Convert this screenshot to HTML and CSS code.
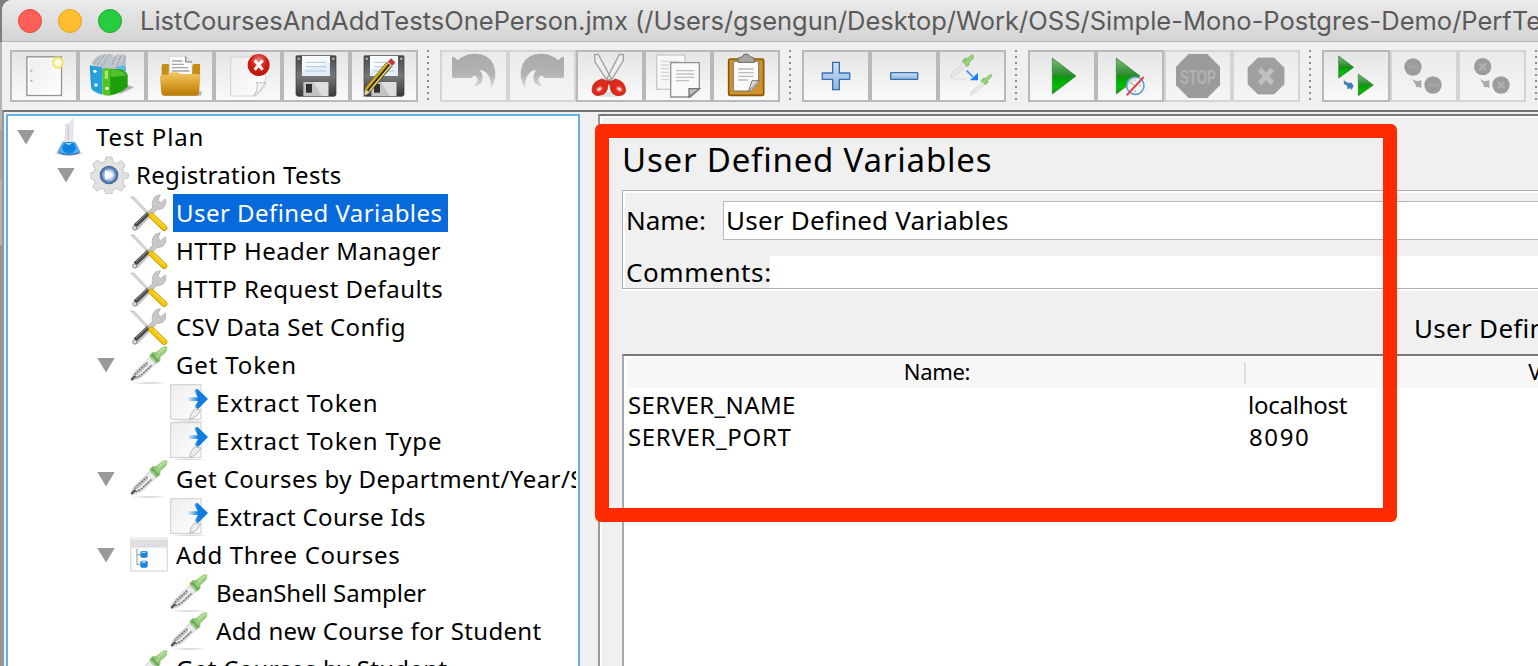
FILE: index.html
```html
<!DOCTYPE html>
<html lang="en">
<head>
<meta charset="utf-8">
<title>Apache JMeter</title>
<link rel="stylesheet" href="styles.css">
</head>
<body>
<svg class="defs" aria-hidden="true">
  <defs>
    <linearGradient id="gGreen" x1="0" y1="0" x2="0" y2="1"><stop offset="0" stop-color="#7dbd7d"/><stop offset=".48" stop-color="#2c8a2c"/><stop offset=".52" stop-color="#0a9a0a"/><stop offset=".8" stop-color="#00c000"/><stop offset="1" stop-color="#178a17"/></linearGradient>
    <linearGradient id="gFolder" x1="0" y1="0" x2="0" y2="1"><stop offset="0" stop-color="#efc768"/><stop offset=".5" stop-color="#dba02a"/><stop offset="1" stop-color="#b87a08"/></linearGradient>
    <linearGradient id="gDisk" x1="0" y1="0" x2="0" y2="1"><stop offset="0" stop-color="#4a4a4d"/><stop offset=".5" stop-color="#77777a"/><stop offset="1" stop-color="#39393b"/></linearGradient>
    <linearGradient id="gBlue" x1="0" y1="0" x2="0" y2="1"><stop offset="0" stop-color="#cfe0f2"/><stop offset="1" stop-color="#8fb7df"/></linearGradient>
    <linearGradient id="gFade" x1="0" y1="0" x2="0" y2="1"><stop offset="0" stop-color="#a9a9a9"/><stop offset=".6" stop-color="#b4b4b4"/><stop offset="1" stop-color="#e6e6e6"/></linearGradient>
    <linearGradient id="gPage" x1="0" y1="0" x2="1" y2="1"><stop offset="0" stop-color="#ededed"/><stop offset="1" stop-color="#ffffff"/></linearGradient>
    <linearGradient id="gArrow" x1="0" y1="0" x2="1" y2="0"><stop offset="0" stop-color="#1c84de" stop-opacity=".1"/><stop offset=".5" stop-color="#0f7ddd"/></linearGradient>
    <linearGradient id="gBulb" x1="0" y1="0" x2="1" y2="1"><stop offset="0" stop-color="#5b9a52"/><stop offset=".5" stop-color="#9fd482"/><stop offset="1" stop-color="#55964a"/></linearGradient>
    <radialGradient id="gRed" cx=".5" cy=".3" r=".7"><stop offset="0" stop-color="#e88"/><stop offset=".5" stop-color="#d21f10"/><stop offset="1" stop-color="#b81408"/></radialGradient>
    <radialGradient id="gGear"><stop offset="0" stop-color="#fff"/><stop offset=".45" stop-color="#cfdaec"/><stop offset=".75" stop-color="#5a82ba"/><stop offset="1" stop-color="#3c5f96"/></radialGradient>
    <radialGradient id="gGlow"><stop offset="0" stop-color="#fff"/><stop offset=".4" stop-color="#fffce0"/><stop offset=".7" stop-color="#f3e05f"/><stop offset="1" stop-color="#f8eb90" stop-opacity="0"/></radialGradient>
  </defs>
  <symbol id="disk" viewBox="852 156 192 144">
    <path d="M888 170q0-3 3-3h114q3 0 3 3v115l-5 4H893l-5-5z" fill="url(#gDisk)" stroke="#3a3a3c" stroke-width="2"/>
    <rect x="906" y="168" width="84" height="60" fill="#e4eef9"/><path d="M906 168h84v20l-84 22z" fill="#f6faff"/>
    <path d="M918 187h60M918 200h60M918 213h60" stroke="#aec6e2" stroke-width="3"/>
    <rect x="910" y="246" width="75" height="42" fill="#c3c3c3"/><path d="M940 246h45v42h-20z" fill="#dedede"/>
    <rect x="918" y="252" width="18" height="26" fill="#303032"/>
    <path d="M893 173h6v6h-6zM997 173h6v6h-6z" fill="#c8c8c8"/>
  </symbol>
  <symbol id="tools" viewBox="390 267 120 114">
    <path d="M392 276l10 0 43 46-3 5z" fill="#d9d9d9" stroke="#b0b0b0" stroke-width="2"/>
    <path d="M400 365L458 307q-5-20 9-34l14-4-7 17 8 7 14-11q5 19-10 29l-16 3-58 60q-12 5-12-9z" fill="#c8c8c8" stroke="#9c9c9c" stroke-width="2.5" stroke-dasharray="5 2"/>
    <path d="M405 363l40-38" stroke="#48484a" stroke-width="12"/><path d="M408 357l36-34" stroke="#99999b" stroke-width="3"/>
    <circle cx="404" cy="369" r="6" fill="#e5e5e5" stroke="#888" stroke-width="3"/>
    <path d="M454 332l39 37" stroke="#cf9d00" stroke-width="18" stroke-linecap="round"/><path d="M454 332l39 36" stroke="#f6c80c" stroke-width="13" stroke-linecap="round"/><path d="M460 332l31 30" stroke="#ffe66d" stroke-width="3"/>
  </symbol>
  <symbol id="dropper" viewBox="390 18 120 114">
    <path d="M394 129q60-4 106 0-54 4-106 0z" fill="#d2d2d2"/>
    <path d="M394 121q-2-13 15-30l40-38 19 17-41 39q-17 12-33 12z" fill="#ececec" stroke="#b4b4b4" stroke-width="2"/>
    <path d="M402 113q3-12 14-22l27-24M406 113q12-3 22-12l28-26" fill="none" stroke="#666" stroke-width="4" stroke-dasharray="7 2"/><path d="M409 104l34-31" stroke="#b5b5b5" stroke-width="4"/><path d="M394 120l12-12" stroke="#505050" stroke-width="7"/>
    <path d="M449 45l9-8 10 0 17-14q10-6 17-3 1 12-7 19l-14 13 0 10-12 9-20-21z" fill="url(#gBulb)"/><path d="M456 44l19 20" stroke="#5a9d54" stroke-width="8" opacity=".65"/><path d="M475 40q13-15 22-15" fill="none" stroke="#b4df9a" stroke-width="7"/>
  </symbol>
  <symbol id="extract" viewBox="510 132 120 114">
    <path d="M514 243q60-3 108 1-60 4-108-1z" fill="#d8d8d8"/>
    <rect x="512" y="134" width="91" height="104" fill="url(#gPage)" stroke="#cecece" stroke-width="3"/>
    <path d="M569 237q0-15 15-30l18 3-10 16q-11 10-23 11z" fill="#eeeeee" stroke="#bababa" stroke-width="3"/>
    <path d="M565 172h28l-9-18q1-9 9-7l31 30-29 29q-9 0-10-8l9-15h-29z" fill="url(#gArrow)"/>
  </symbol>
  <symbol id="flask" viewBox="150 39 120 114">
    <ellipse cx="206" cy="144" rx="41" ry="5" fill="#b8b8c4" opacity=".6"/>
    <path d="M197 58l13-4 10-15-3 62 22 40q-32 18-65 0l21-40z" fill="#e6e6ee" stroke="#d4d4dc" stroke-width="2"/>
    <path d="M188 111h38l15 29q-34 20-69 0z" fill="#5aaaec"/><ellipse cx="207" cy="128" rx="20" ry="18" fill="#0d84e2"/><path d="M196 114h20l-9 7z" fill="#b9dcf7"/><path d="M175 143q31 13 64 0" stroke="#4976ab" stroke-width="4" fill="none"/><path d="M205 60v45" stroke="#c9c9d2" stroke-width="4"/>
  </symbol>
  <symbol id="gear" viewBox="270 153 120 114">
    <path d="M318 156h17l4 15 11 5 14-9 11 12-7 14 5 11 12 1v13l-12 3-4 11 6 14-12 12-13-8-11 5-4 12h-17l-4-12-11-5-13 8-12-12 7-14-5-11-11-3v-14l12-2 4-11-7-13 12-12 14 8 11-5z" fill="#e2e2e2" stroke="#b8b8b8" stroke-width="3" stroke-dasharray="8 2"/>
    <circle cx="327" cy="210" r="28" fill="url(#gGear)"/><path d="M315 195l26 15-26 14z" fill="#fff"/>
  </symbol>
  <symbol id="logic" viewBox="390 138 120 114">
    <rect x="392" y="145" width="110" height="98" fill="#fdfdfd" stroke="#dcdcdc" stroke-width="4"/><rect x="390" y="144" width="114" height="29" fill="#dedede"/><path d="M393 147h108" stroke="#f5f5f5" stroke-width="4"/>
    <path d="M411 176v48h11M411 194h10" fill="none" stroke="#969696" stroke-width="3"/><rect x="421" y="183" width="22" height="20" rx="5" fill="#1a86e0"/><rect x="421" y="212" width="22" height="21" rx="5" fill="#1a86e0"/><path d="M425 187h12M425 216h12" stroke="#b8dbfa" stroke-width="4"/>
  </symbol>
</svg>
<div class="window">
  <header class="titlebar">
    <i class="light close"></i><i class="light minimize"></i><i class="light maximize"></i>
    <span class="title">ListCoursesAndAddTestsOnePerson.jmx (/Users/gsengun/Desktop/Work/OSS/Simple-Mono-Postgres-Demo/PerfTe</span>
  </header>
  <nav class="toolbar">
    <button class="tool"><svg viewBox="36 156 192 144"><rect x="81" y="171" width="103" height="115" fill="url(#gPage)" stroke="#96968c" stroke-width="5"/><rect x="85" y="175" width="95" height="107" fill="none" stroke="#fff" stroke-width="4"/><path d="M92 210h5v5h-5zM92 240h5v5h-5z" fill="#aaa"/><circle cx="174" cy="188" r="21" fill="url(#gGlow)"/></svg></button>
    <button class="tool"><svg viewBox="240 156 192 144"><path d="M382 255l20 7-48 23z" fill="#777" opacity=".55"/><path d="M274 187l15-17 15-7 35-1 1 10 13-9 25 1v54l-72 18z" fill="#c0c7cc"/><path d="M280 193l20-24M292 194l22-29M306 198l23-34M336 194l12-28M351 199l12-34M368 202l7-34" stroke="#909a9f" stroke-width="3" stroke-dasharray="6 3"/><path d="M340 205l30-10 8 6v12l-20-6z" fill="#5cb6e6"/><path d="M270 196l26 7v70l-23-12z" fill="#0b76ba"/><path d="M273 197l34 5v82q-20-4-33-17z" fill="#28a0dd"/><path d="M307 209q2-5 8-5l18 2v80q-16 4-26-4z" fill="#53c522"/><path d="M331 207l31 1q16 6 21 17v35q-20 20-52 26z" fill="#209d0b"/><path d="M331 209q36-3 48 18l-46 4z" fill="#55bf2e"/><path d="M314 212h10v24h-10z" fill="#a5e77c"/><circle cx="285" cy="214" r="5" fill="#fff"/><circle cx="288" cy="255" r="5" fill="#fff"/><circle cx="321" cy="265" r="5" fill="#fff"/></svg></button>
    <button class="tool"><svg viewBox="444 156 192 144"><path d="M484 287h119l3-13z" fill="#777" opacity=".5"/><path d="M485 197q0-5 5-5h18l8 8h60l4-8h20v52H485z" fill="#c98d16"/><path d="M508 169h49l19 17v45h-69z" fill="#fbfbfb" stroke="#c7c7c7" stroke-width="2"/><path d="M557 169v17h19" fill="#ddd" stroke="#777" stroke-width="3"/><path d="M516 183h31M516 193h35M516 203h48M516 213h53" stroke="#a5a5a5" stroke-width="4"/><path d="M480 232q0-8 7-8h16l12-7h19l8 5h51q8 0 8 7l-4 50q-1 8-9 8h-96q-7 0-8-8z" fill="url(#gFolder)"/></svg></button>
    <button class="tool"><svg viewBox="648 156 192 144"><path d="M692 171h104v88l-29 29h-75z" fill="url(#gPage)" stroke="#d3d3d3" stroke-width="3"/><path d="M796 247q-20 5-26-1 7 18-8 41 21-13 34-40z" fill="#f5f5f5" stroke="#bdbdbd" stroke-width="3"/><circle cx="776" cy="195" r="33" fill="url(#gRed)"/><path d="M764 181l24 28M788 181l-24 28" stroke="#fff" stroke-width="9"/></svg></button>
    <button class="tool"><svg><use href="#disk"/></svg></button>
    <button class="tool"><svg viewBox="852 156 192 144"><use href="#disk" x="852" y="156" width="192" height="144"/><path d="M886 291l7-25 13 11z" fill="#e8cd98"/><path d="M886 291l3-9 6 5z" fill="#444"/><path d="M898 271l66-78" stroke="#303030" stroke-width="21"/><path d="M894 267l65-78" stroke="#d5ad18" stroke-width="8"/><path d="M904 274l65-78" stroke="#f0d348" stroke-width="5"/><path d="M964 183l13 11" stroke="#ddd" stroke-width="5"/><path d="M966 191l10-10" stroke="#c5353b" stroke-width="18"/></svg></button>
    <i class="separator"></i>
    <button class="tool disabled"><svg viewBox="66 156 192 144"><path d="M96 173q3-6 9 0l8 8q22-21 52-20 41 0 55 32 16 40-9 75 3-30-6-42-10-18-28-15 14 10 10 30-7 20-26 16 18-16 8-27-10-7-12 4h-57q-4-1-4-5z" fill="url(#gFade)"/></svg></button>
    <button class="tool disabled"><svg viewBox="270 156 192 144"><path d="M432 173q-3-6-9 0l-8 8q-22-21-52-20-41 0-55 32-16 40 9 75-3-30 6-42 10-18 28-15-14 10-10 30 7 20 26 16-18-16-8-27 10-7 12 4h57q4-1 4-5z" fill="url(#gFade)"/></svg></button>
    <button class="tool"><svg viewBox="474 156 192 144"><ellipse cx="568" cy="284" rx="45" ry="7" fill="#999" opacity=".25"/><path d="M524 164l11-1 39 73-10 9-39-59zM598 163l12 1v18l-39 63-10-10z" fill="#eee" stroke="#a1a19e" stroke-width="4"/><path d="M559 242l-13-5q-31 8-30 34 2 18 23 15 25-4 24-29l4-9 3 9q1 27 24 30 22 0 23-16-2-28-31-34l-12 7z" fill="#dc291c" stroke="#bd1d15" stroke-width="2"/><ellipse cx="538" cy="267" rx="9" ry="6" fill="#f7dedb" stroke="#ef5a4f" stroke-width="4" transform="rotate(-35 538 267)"/><ellipse cx="598" cy="267" rx="9" ry="6" fill="#f7dedb" stroke="#ef5a4f" stroke-width="4" transform="rotate(35 598 267)"/></svg></button>
    <button class="tool"><svg viewBox="678 156 192 144"><rect x="710" y="165" width="85" height="103" fill="#f7f7f7" stroke="#c9c9c9" stroke-width="4"/><path d="M723 184h54M723 195h25M723 206h25M723 217h25M723 228h25M723 239h25" stroke="#d6d6d6" stroke-width="4"/><path d="M752 188h86v79l-27 24h-59z" fill="#fafafa" stroke="#92928f" stroke-width="4"/><path d="M838 266h-31v25z" fill="#c1c1bf" stroke="#777" stroke-width="4"/><path d="M768 212h55M768 222h55M768 232h55M768 242h40" stroke="#c1c1c1" stroke-width="4"/></svg></button>
    <button class="tool"><svg viewBox="882 156 192 144"><rect x="926" y="177" width="105" height="109" rx="5" fill="#ce922c" stroke="#8b5706" stroke-width="5"/><path d="M940 184h76v64l-24 25h-52z" fill="#fafafa" stroke="#777" stroke-width="3"/><path d="M1016 242h-20l-10 31z" fill="#ddd" stroke="#777" stroke-width="3"/><path d="M955 207h46M955 218h46M955 229h46M955 240h29" stroke="#bbb" stroke-width="4"/><path d="M954 187v-8q0-8 10-8h3q2-9 11-9t12 9h3q10 0 10 9v7z" fill="#a6a79e" stroke="#666860" stroke-width="3"/></svg></button>
    <i class="separator"></i>
    <button class="tool"><svg viewBox="72 156 192 144"><path d="M158 187h20v32h31v19h-31v31h-20v-31h-31v-19h31z" fill="url(#gBlue)" stroke="#3770ae" stroke-width="4"/></svg></button>
    <button class="tool"><svg viewBox="276 156 192 144"><rect x="332" y="218" width="81" height="20" rx="1" fill="url(#gBlue)" stroke="#3770ae" stroke-width="4"/></svg></button>
    <button class="tool"><svg viewBox="480 156 192 144"><path d="M512 234q0-13 12-24l27-24 9 9-30 29z" fill="#e7e7e7" stroke="#cdcdcd" stroke-width="2"/><path d="M513 237h45" stroke="#ddd" stroke-width="3"/><path d="M546 184l9-11 7 1 13-11 7 1q3 11-8 18l-5 5v7l-9 7z" fill="url(#gBulb)"/><path d="M572 286q0-14 14-23l20-18 8 9-24 20z" fill="#e9e9e9" stroke="#d0d0d0" stroke-width="2"/><path d="M601 242l10-9 6 0 13-11 7 1q0 10-12 18v7l-9 7z" fill="url(#gBulb)"/><path d="M560 212l18 18" stroke="#489cf4" stroke-width="6"/><path d="M594 218v23h-25z" fill="#1681f2"/></svg></button>
    <i class="separator"></i>
    <button class="tool"><svg viewBox="750 156 192 144"><path d="M817 174l71 54-71 54z" fill="url(#gGreen)" stroke="#297d29" stroke-width="2"/></svg></button>
    <button class="tool"><svg viewBox="954 156 192 144"><path d="M1009 174l71 54-71 54z" fill="url(#gGreen)" stroke="#297d29" stroke-width="2"/><circle cx="1066" cy="257" r="26" fill="#eef4fa" fill-opacity=".85" stroke="#6c9dcc" stroke-width="5"/><path d="M1051 247l15 13 13-15M1066 239v4M1066 271v6M1083 257h-6" fill="none" stroke="#bbb" stroke-width="4"/><path d="M1040 286l51-55" stroke="#e84040" stroke-width="6"/></svg></button>
    <button class="tool disabled"><svg viewBox="48 156 192 144"><path d="M116 162h56l38 38v56l-38 38h-56l-38-38v-56z" fill="#9b9b9b"/><text class="stop" x="90" y="251" textLength="108" lengthAdjust="spacingAndGlyphs">STOP</text></svg></button>
    <button class="tool disabled"><svg viewBox="252 156 192 144"><path d="M324 174h48l30 29v50l-30 29h-48l-30-29v-50z" fill="#a0a0a0" stroke="#979797" stroke-width="2"/><path d="M329 208l38 42M367 208l-38 42" stroke="#c0c0c0" stroke-width="15"/></svg></button>
    <i class="separator"></i>
    <button class="tool"><svg viewBox="522 156 192 144"><path d="M566 168l45 34-45 32z" fill="url(#gGreen)" stroke="#297d29" stroke-width="2"/><path d="M625 222l45 33-45 32z" fill="url(#gGreen)" stroke="#297d29" stroke-width="2"/><path d="M581 241l12 7 12 0 6 10-7 13-2-6-10 2-1-10-9-5z" fill="#477fbd"/></svg></button>
    <button class="tool disabled"><svg viewBox="726 156 192 144"><circle cx="789" cy="201" r="26" fill="#9c9c9c"/><circle cx="849" cy="255" r="26" fill="#9c9c9c"/><path d="M772 201h34M832 255h34" stroke="#a3a3a3" stroke-width="10"/><path d="M786 238l14 6 14-3v24l-7-4-9 1-2-10z" fill="#aaa"/></svg></button>
    <button class="tool disabled"><svg viewBox="930 156 192 144"><circle cx="998" cy="200" r="26" fill="#9c9c9c"/><circle cx="1053" cy="255" r="26" fill="#9c9c9c"/><path d="M988 190l20 20M1008 190l-20 20M1043 245l20 20M1063 245l-20 20" stroke="#b0b0b0" stroke-width="7"/><path d="M990 238l14 6 14-3v24l-7-4-9 1-2-10z" fill="#aaa"/></svg></button>
    <i class="separator"></i>
  </nav>
  <main class="content">
    <ul class="tree">
      <li class="node level-0"><i class="arrow"></i><svg><use href="#flask"/></svg><span class="label">Test Plan</span></li>
      <li class="node level-1"><i class="arrow"></i><svg><use href="#gear"/></svg><span class="label snug">Registration Tests</span></li>
      <li class="node level-2"><i class="arrow leaf"></i><svg><use href="#tools"/></svg><span class="label medium selected">User Defined Variables</span></li>
      <li class="node level-2"><i class="arrow leaf"></i><svg><use href="#tools"/></svg><span class="label medium">HTTP Header Manager</span></li>
      <li class="node level-2"><i class="arrow leaf"></i><svg><use href="#tools"/></svg><span class="label medium">HTTP Request Defaults</span></li>
      <li class="node level-2"><i class="arrow leaf"></i><svg><use href="#tools"/></svg><span class="label snug">CSV Data Set Config</span></li>
      <li class="node level-2"><i class="arrow"></i><svg><use href="#dropper"/></svg><span class="label">Get Token</span></li>
      <li class="node level-3"><i class="arrow leaf"></i><svg><use href="#extract"/></svg><span class="label">Extract Token</span></li>
      <li class="node level-3"><i class="arrow leaf"></i><svg><use href="#extract"/></svg><span class="label">Extract Token Type</span></li>
      <li class="node level-2"><i class="arrow"></i><svg><use href="#dropper"/></svg><span class="label medium">Get Courses by Department/Year/S</span></li>
      <li class="node level-3"><i class="arrow leaf"></i><svg><use href="#extract"/></svg><span class="label snug">Extract Course Ids</span></li>
      <li class="node level-2"><i class="arrow"></i><svg><use href="#logic"/></svg><span class="label loose">Add Three Courses</span></li>
      <li class="node level-3"><i class="arrow leaf"></i><svg><use href="#dropper"/></svg><span class="label tight">BeanShell Sampler</span></li>
      <li class="node level-3"><i class="arrow leaf"></i><svg><use href="#dropper"/></svg><span class="label snug">Add new Course for Student</span></li>
      <li class="node level-2"><i class="arrow leaf"></i><svg><use href="#dropper"/></svg><span class="label snug">Get Courses by Student</span></li>
    </ul>
    <section class="panel">
      <h1 class="heading">User Defined Variables</h1>
      <div class="form">
        <div class="field name-row"><span class="caption">Name:</span><div class="input">User Defined Variables</div></div>
        <div class="field comment-row"><span class="caption">Comments:</span><div class="input"></div></div>
      </div>
      <div class="table-title">User Defined Variables</div>
      <div class="table">
        <div class="table-head"><span class="head-cell">Name:</span><span class="head-cell value">Value</span></div>
        <div class="table-row"><span class="cell">SERVER_NAME</span><span class="cell text">localhost</span></div>
        <div class="table-row"><span class="cell port">SERVER_PORT</span><span class="cell num">8090</span></div>
      </div>
    </section>
  </main>
</div>
<div class="highlight"></div>
</body>
</html>
```
FILE: styles.css
```css
* { box-sizing: border-box; }
body {
  margin: 0;
  width: 1538px;
  height: 666px;
  overflow: hidden;
  background: linear-gradient(#7f7f7f 0 42px, #b4b4b4 42px 130px, #a5a5a5 130px 180px, #b4b4b4 180px 245px, #969696 245px);
  font-family: "Noto Sans", "Open Sans", sans-serif;
  color: #000;
}
.defs { position: absolute; width: 0; height: 0; }
.window {
  margin-left: 2px;
  width: 1536px;
  height: 666px;
  display: flex;
  flex-direction: column;
  overflow: hidden;
  background: #f0f0f0;
  border-top-left-radius: 10px;
}
.titlebar {
  flex: none;
  height: 42px;
  padding-left: 16px;
  display: flex;
  align-items: center;
  background: linear-gradient(#ebebeb, #d4d4d4);
  border-bottom: 1px solid #b4b4b4;
  white-space: nowrap;
}
.light { flex: none; width: 24px; height: 24px; margin-right: 16px; border-radius: 50%; border: 1px solid; }
.close { background: #ff5f57; border-color: #e2463f; }
.minimize { background: #ffbe2f; border-color: #e1a125; }
.maximize { background: #29cb41; border-color: #1caa2d; }
.title { margin-left: 2px; font-family: Inter, sans-serif; font-size: 25.5px; line-height: 40px; color: #5a5a5a; }
.toolbar { flex: none; height: 68px; padding: 8px 0 0 8px; display: flex; }
.tool {
  flex: none;
  width: 68px;
  height: 52px;
  padding: 0;
  border: 2px solid #b9b9b9;
  border-radius: 0;
  background: linear-gradient(#e5e5e5, #fafafa);
}
.tool.disabled { border-color: #d4d4d4; background: linear-gradient(#ebebeb, #f5f5f5); }
.tool svg { display: block; width: 64px; height: 48px; }
.stop { font: bold 63px "Liberation Sans", sans-serif; fill: #b2b2b2; }
.separator {
  flex: none;
  width: 2px;
  height: 50px;
  margin: 0 11px 0 9px;
  background: repeating-linear-gradient(#8c8c8c 0 2px, transparent 2px 6px);
}
.content { flex: 1; min-height: 0; display: flex; gap: 18px; border-top: 2px solid #717171; padding: 2px 0 0 2px; border-left: 2px solid #989898; }
.tree {
  flex: none;
  width: 574px;
  height: 600px;
  margin: 0;
  padding: 2px 2px 0 0;
  border: 2px solid #62b1e9;
  background: #fff;
  list-style: none;
  overflow: hidden;
}
.node { display: flex; width: 568px; height: 38px; align-items: center; overflow: hidden; font-size: 24px; letter-spacing: .85px; white-space: nowrap; }
.node svg { flex: none; width: 40px; height: 38px; margin-left: 15px; }
.arrow { flex: none; width: 18px; height: 15px; background: #999; clip-path: polygon(0 0, 100% 0, 50% 100%); }
.arrow.leaf { visibility: hidden; }
.level-0 { padding-left: 9px; }
.level-1 { padding-left: 49px; }
.level-2 { padding-left: 89px; }
.level-3 { padding-left: 129px; }
.label { flex: none; height: 38px; margin-left: 3px; padding: 0 4px 0 3px; line-height: 38px; }
.loose { letter-spacing: .67px; }
.medium { letter-spacing: .45px; }
.snug { letter-spacing: .32px; }
.tight { letter-spacing: -.05px; }
.selected { width: 275px; background: #0669dc; color: #fff; }
.panel {
  flex: 1;
  min-width: 0;
  height: 600px;
  display: flex;
  flex-direction: column;
  overflow: hidden;
  padding-left: 22px;
  border-top: 2px solid #777;
  border-left: 2px solid #999;
  box-shadow: inset 2px 2px #fff;
}
.heading { flex: none; height: 74px; margin: 0; padding-top: 21px; font-size: 33px; font-weight: 400; line-height: 46px; letter-spacing: .8px; white-space: nowrap; }
.form {
  flex: none;
  height: 99px;
  border: 1px solid #b0b0b0;
  border-right: 0;
  box-shadow: inset 2px 2px #fff, 0 2px #fff;
  display: flex;
  flex-direction: column;
}
.field { display: flex; font-size: 26px; white-space: nowrap; }
.name-row { padding: 10px 0 0 3px; height: 65px; }
.name-row .caption { width: 97px; line-height: 38px; letter-spacing: -.1px; }
.name-row .input { flex: 1; height: 39px; padding-left: 2px; line-height: 37px; background: #fff; border: 1px solid #b9b9b9; border-right: 0; letter-spacing: .22px; }
.comment-row { height: 32px; padding-left: 3px; }
.comment-row .caption { width: 144px; line-height: 32px; letter-spacing: .6px; }
.comment-row .input { flex: 1; background: #fff; }
.table-title { flex: none; height: 65px; padding: 20px 0 0 792px; font-size: 26px; line-height: 38px; letter-spacing: .3px; white-space: nowrap; }
.table { flex: 1; border-top: 2px solid #777; border-left: 2px solid #aaa; background: #fff; padding: 2px 0 0 2px; }
.table-head { display: flex; height: 30px; margin-bottom: 1px; background: #f7f7f7; font-size: 22px; line-height: 27px; }
.head-cell { flex: none; width: 620px; height: 26px; padding-left: 2px; text-align: center; letter-spacing: -.3px; }
.head-cell.value { height: 22px; margin-top: 4px; border-left: 2px solid #e1e1e1; line-height: 19px; margin-left: -2px; }
.table-row { display: flex; height: 32px; font-size: 24px; line-height: 32px; letter-spacing: .4px; }
.cell { flex: none; width: 620px; padding-left: 2px; }
.port { letter-spacing: .65px; }
.text { letter-spacing: -.25px; }
.num { padding-left: 3px; letter-spacing: 1.6px; }
.highlight {
  position: absolute;
  left: 595px;
  top: 124px;
  width: 802px;
  height: 398px;
  border: 14px solid #ff2a00;
  border-radius: 6px;
}
```
